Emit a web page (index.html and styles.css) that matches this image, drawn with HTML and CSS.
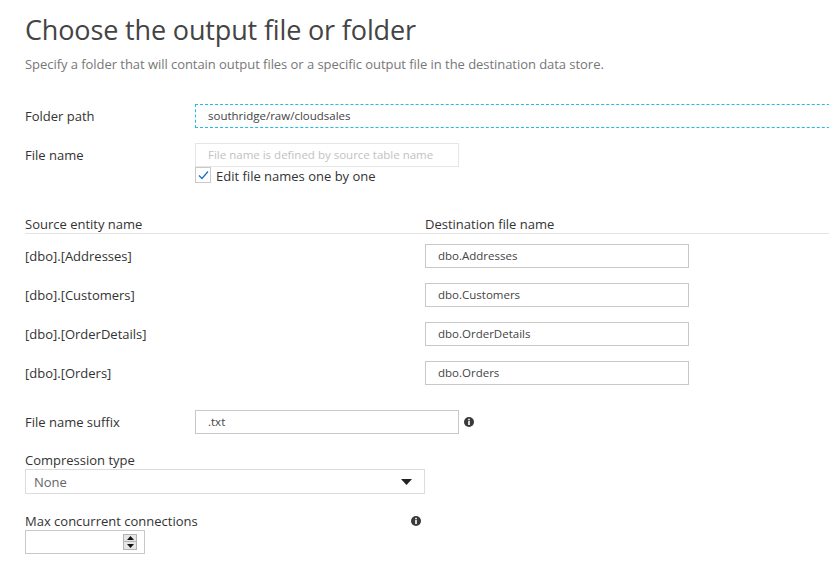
FILE: index.html
```html
<!DOCTYPE html>
<html lang="en">
<head>
<meta charset="utf-8">
<title>Choose the output file or folder</title>
<link rel="stylesheet" href="styles.css">
</head>
<body>
<div class="page">
  <h1 class="title">Choose the output file or folder</h1>
  <p class="subtitle">Specify a folder that will contain output files or a specific output file in the destination data store.</p>

  <div class="field-row folder-row">
    <span class="label">Folder path</span>
    <div class="input dashed wide">southridge/raw/cloudsales</div>
  </div>

  <div class="field-row file-row">
    <span class="label">File name</span>
    <div class="stack">
      <div class="input disabled">File name is defined by source table name</div>
      <div class="check">
        <span class="box"><svg width="14" height="14" viewBox="0 0 14 14"><polyline points="3,7.5 6,10.5 12,3.5" fill="none" stroke="#1e6fc8" stroke-width="1.3"/></svg></span>
        <span>Edit file names one by one</span>
      </div>
    </div>
  </div>

  <div class="map">
    <div class="map-head">
      <span class="col-src">Source entity name</span>
      <span class="col-dst">Destination file name</span>
    </div>
    <div class="map-body">
      <div class="map-row"><span class="col-src">[dbo].[Addresses]</span><div class="input dst">dbo.Addresses</div></div>
      <div class="map-row"><span class="col-src">[dbo].[Customers]</span><div class="input dst">dbo.Customers</div></div>
      <div class="map-row"><span class="col-src">[dbo].[OrderDetails]</span><div class="input dst">dbo.OrderDetails</div></div>
      <div class="map-row"><span class="col-src">[dbo].[Orders]</span><div class="input dst">dbo.Orders</div></div>
    </div>
  </div>

  <div class="field-row suffix-row">
    <span class="label">File name suffix</span>
    <div class="input">.txt</div>
    <svg class="info" width="10" height="10" viewBox="0 0 10 10"><circle cx="5" cy="5" r="5" fill="#3a3a3a"/><rect x="4.2" y="4" width="1.6" height="4" fill="#fff"/><rect x="4.2" y="1.8" width="1.6" height="1.5" fill="#fff"/></svg>
  </div>

  <div class="block compression">
    <div class="block-label">Compression type</div>
    <div class="select">
      <span>None</span>
      <svg width="11" height="6" viewBox="0 0 11 6"><polygon points="0,0 11,0 5.5,6" fill="#222"/></svg>
    </div>
  </div>

  <div class="block connections">
    <div class="block-label with-info">
      <span>Max concurrent connections</span>
      <svg class="info" width="10" height="10" viewBox="0 0 10 10"><circle cx="5" cy="5" r="5" fill="#3a3a3a"/><rect x="4.2" y="4" width="1.6" height="4" fill="#fff"/><rect x="4.2" y="1.8" width="1.6" height="1.5" fill="#fff"/></svg>
    </div>
    <div class="spinner">
      <div class="spin-btns">
        <span class="spin up"><svg width="7" height="4" viewBox="0 0 7 4"><polygon points="0,4 7,4 3.5,0" fill="#111"/></svg></span>
        <span class="spin down"><svg width="7" height="4" viewBox="0 0 7 4"><polygon points="0,0 7,0 3.5,4" fill="#111"/></svg></span>
      </div>
    </div>
  </div>
</div>
</body>
</html>
```

FILE: styles.css
```css
html, body {
  margin: 0;
  padding: 0;
  background: #fff;
}

body {
  font-family: "Open Sans", "Noto Sans", sans-serif;
  color: #333;
  font-size: 13px;
  overflow: hidden;
}

.page {
  width: 829px;
  height: 581px;
  overflow: hidden;
  box-sizing: border-box;
  padding: 12px 0 0 25px;
}

.title {
  margin: 0;
  font-size: 27px;
  font-weight: 400;
  line-height: 36px;
  color: #444;
  letter-spacing: -0.15px;
}

.subtitle {
  margin: 6px 0 0;
  font-size: 13px;
  line-height: 20px;
  color: #777;
  letter-spacing: -0.05px;
}

.field-row {
  display: flex;
  align-items: center;
}

.label {
  width: 170px;
  flex: none;
  line-height: 24px;
}

.input {
  box-sizing: border-box;
  width: 264px;
  height: 24px;
  border: 1px solid #c8c8c8;
  padding: 0 12px;
  font-size: 11.5px;
  line-height: 22px;
  color: #444;
  white-space: nowrap;
  overflow: hidden;
}

.dashed {
  border: 1px dashed #22bde6;
}

.wide {
  width: 700px;
  flex: none;
}

.folder-row {
  margin-top: 30px;
}

.file-row {
  margin-top: 15px;
  align-items: flex-start;
}

.disabled {
  border-color: #e6e6e6;
  color: #c2c2c2;
}

.stack {
  display: flex;
  flex-direction: column;
}

.check {
  display: flex;
  align-items: center;
  gap: 5px;
  height: 16px;
  line-height: 16px;
}

.check span:last-child {
  position: relative;
  top: 1px;
}

.box {
  box-sizing: border-box;
  width: 16px;
  height: 16px;
  border: 1px solid #c9c9c9;
  display: flex;
  align-items: center;
  justify-content: center;
}

.map {
  margin-top: 33px;
}

.map-head {
  display: flex;
  line-height: 17px;
  border-bottom: 1px solid #e3e3e3;
  margin-right: -10px;
}

.col-src {
  width: 400px;
  flex: none;
}

.map-body {
  display: flex;
  flex-direction: column;
  gap: 15px;
  padding-top: 10px;
}

.map-row {
  display: flex;
  align-items: center;
  height: 24px;
}

.suffix-row {
  margin-top: 25px;
}

.suffix-row .info {
  margin-left: 5px;
}

.block-label {
  line-height: 18px;
}

.compression {
  margin-top: 17px;
}

.select {
  box-sizing: border-box;
  width: 400px;
  height: 25px;
  border: 1px solid #dcdcdc;
  display: flex;
  align-items: center;
  justify-content: space-between;
  padding: 0 12px 0 8px;
  color: #666;
}

.connections {
  margin-top: 18px;
}

.with-info {
  width: 399px;
  display: flex;
  align-items: center;
  justify-content: space-between;
}

.with-info .info {
  margin-right: 3px;
}

.spinner {
  box-sizing: border-box;
  width: 120px;
  height: 24px;
  border: 1px solid #c8c8c8;
  display: flex;
  align-items: center;
  justify-content: flex-end;
  padding-right: 7px;
}

.spin-btns {
  display: flex;
  flex-direction: column;
}

.spin {
  box-sizing: border-box;
  width: 14px;
  height: 8px;
  background: #e6e6e6;
  border: 1px solid #b4b4b4;
  display: flex;
  align-items: center;
  justify-content: center;
}

.spin.down {
  border-top: none;
}
```
